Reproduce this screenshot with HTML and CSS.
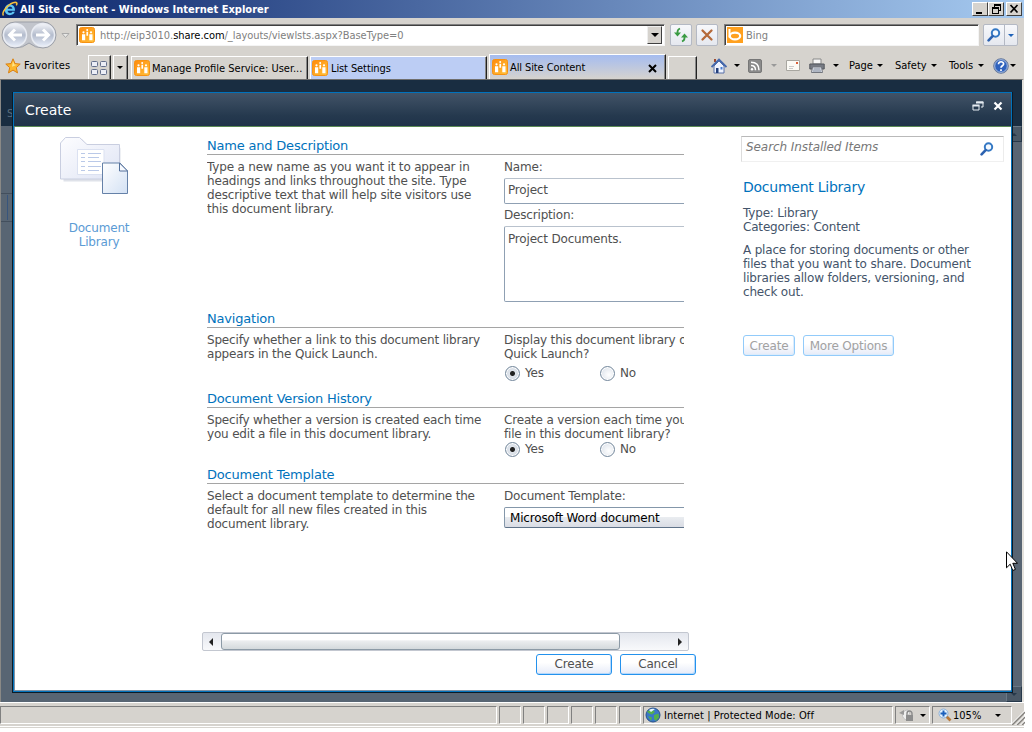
FILE: index.html
```
<!DOCTYPE html>
<html lang="en">
<head>
<meta charset="utf-8">
<title>All Site Content - Windows Internet Explorer</title>
<link rel="stylesheet" href="styles.css">
</head>
<body>
<svg class="defs" width="0" height="0">
  <defs>
    <linearGradient id="g-orange" x1="0" y1="0" x2="1" y2="1"><stop offset="0" stop-color="#ff8a0c"/><stop offset="1" stop-color="#ffc23a"/></linearGradient>
    <linearGradient id="g-nav" x1="0" y1="0" x2="0" y2="1"><stop offset="0" stop-color="#f4f6fa"/><stop offset=".5" stop-color="#b4bccd"/><stop offset="1" stop-color="#e8eefa"/></linearGradient>
    <linearGradient id="g-folder" x1="0" y1="0" x2="1" y2="1"><stop offset="0" stop-color="#fdfdff"/><stop offset="1" stop-color="#dfe4f4"/></linearGradient>
    <linearGradient id="g-page" x1="0" y1="0" x2="1" y2="1"><stop offset="0" stop-color="#ffffff"/><stop offset="1" stop-color="#d3e1f4"/></linearGradient>
  </defs>
  <symbol id="site" viewBox="0 0 16 16">
    <rect x=".5" y=".5" width="15" height="15" rx="2" fill="url(#g-orange)" stroke="#f79212"/>
    <g fill="#fff"><circle cx="4.500" cy="5.300" r="1.100"/><circle cx="8.200" cy="3" r="1"/><circle cx="12" cy="5.300" r="1.100"/>
    <path d="M3 7.200h3.200v6H3zM7.400 4.800h1.700v4H7.400zM10.300 7.200h3.200v6h-3.200z"/></g>
  </symbol>
  <symbol id="mag" viewBox="0 0 14 14">
    <circle cx="8.5" cy="5" r="3.700" fill="#f5faff" stroke="#3478c4" stroke-width="2"/>
    <path d="M5.600 8.200 1.600 12.400" stroke="#2c62b0" stroke-width="2.600" stroke-linecap="round"/>
  </symbol>
</svg>

<div class="window">
  <header class="titlebar">
    <svg class="ie" viewBox="0 0 16 16"><path d="M13 9.800H5.600c.2 2.600 4 2.800 4.600 1h2.600c-1.600 5-10.300 4.400-10-2C2.400 1.600 13.400 1.200 13 9.800zM5.700 7.700h4.700c-.3-2.600-4.400-2.600-4.700 0z" fill="#5cc4f5"/><path d="M1.500 14.500C-1 11.500 7 1.500 13.500 1.200c2 0 1.500 2 .8 3.200" fill="none" stroke="#f8c03c" stroke-width="1.500"/></svg>
    <span class="title-text">All Site Content - Windows Internet Explorer</span>
    <div class="caption-buttons">
      <span class="cap"><svg viewBox="0 0 14 12"><path d="M3 9h6v2H3z"/></svg></span>
      <span class="cap"><svg viewBox="0 0 14 12"><path d="M5 1h7v2H5zM5 3h1v2H5zM11 3h1v5h-2V7h1zM3 4h7v2H3zM3 6h1v5H3zM9 6h1v5H9zM4 10h5v1H4z"/></svg></span>
      <span class="cap cap-close"><svg viewBox="0 0 14 12"><path d="m3.500 2 7 7.500m0-7.500-7 7.500" stroke="#000" stroke-width="1.700"/></svg></span>
    </div>
  </header>

  <div class="address-row">
    <svg class="nav" viewBox="0 0 72 30">
      <path d="M15 2h28a13 13 0 0 1 0 26q-8 0-14-5-6 5-14 5a13 13 0 0 1 0-26z" fill="#c2c5cc" stroke="#9b9fa8"/>
      <circle cx="15" cy="15" r="11.500" fill="url(#g-nav)" stroke="#e9ecf3" stroke-width="1.500"/>
      <circle cx="43" cy="15" r="11.500" fill="url(#g-nav)" stroke="#e9ecf3" stroke-width="1.500"/>
      <path d="M22 15H10m5-5.500L9.500 15l5.500 5.500" fill="none" stroke="#fff" stroke-width="3"/>
      <path d="M36 15h12m-5-5.500 5.500 5.500-5.500 5.500" fill="none" stroke="#fff" stroke-width="3"/>
      <path d="M62 13.500h7l-3.500 4z" fill="#e8e8e6" stroke="#a9a9a9"/>
    </svg>
    <div class="field address">
      <svg class="i16"><use href="#site"/></svg>
      <span class="url">http://eip3010.<b>share.com</b>/_layouts/viewlsts.aspx?BaseType=0</span>
      <span class="drop-btn"><i class="tri big"></i></span>
    </div>
    <span class="sq refresh"><svg viewBox="0 0 16 16"><path d="M7 1.500Q4.500 2.500 4.500 5v1" fill="none" stroke="#3a9b43" stroke-width="1.800"/><path d="M1 5.500h7L4.500 9.500z" fill="#3a9b43"/><path d="M9 14.500q2.500-1 2.500-3.500v-1" fill="none" stroke="#3a9b43" stroke-width="1.800"/><path d="M8 10.500h7l-3.500-4z" fill="#3a9b43"/></svg></span>
    <span class="sq stop"><svg viewBox="0 0 16 16"><path d="m3.500 3.500 9 9M12.500 3.500l-9 9" stroke="#b56a3a" stroke-width="2.300" stroke-linecap="round"/></svg></span>
    <div class="field bing">
      <svg class="i16" viewBox="0 0 16 16"><rect width="16" height="16" fill="#ffa01e"/><path d="M2.500 2v8.500" stroke="#fff" stroke-width="2"/><ellipse cx="8" cy="9" rx="5.200" ry="3.400" fill="none" stroke="#fff" stroke-width="2.200"/></svg>
      <span class="url">Bing</span>
    </div>
    <div class="search-btn"><span><svg viewBox="0 0 14 14"><use href="#mag"/></svg></span><span class="sb-drop"><i class="tri blue"></i></span></div>
  </div>

  <div class="tab-row">
    <svg class="star" viewBox="0 0 16 16"><path d="m8 .8 2 4.800 5.200.5-3.900 3.500 1.200 5.300L8 12.100 3.500 14.900l1.200-5.300L.8 6.100 6 5.600z" fill="#fdb72c" stroke="#d98014"/><path d="m8 3 1.200 3.400 2.800.4-5 2z" fill="#ffe58a"/></svg>
    <span class="fav">Favorites</span>
    <span class="raised quick"><svg viewBox="0 0 16 16"><g fill="#eceef6" stroke="#65708c"><rect x=".5" y="1.500" width="6" height="5" rx="1"/><rect x="9.500" y="1.500" width="6" height="5" rx="1"/><rect x=".5" y="9.500" width="6" height="5" rx="1"/><rect x="9.500" y="9.500" width="6" height="5" rx="1"/></g></svg></span>
    <span class="raised qdrop"><i class="tri"></i></span>
    <div class="tab t1"><svg class="i16"><use href="#site"/></svg><span>Manage Profile Service: User...</span></div>
    <div class="tab t2"><svg class="i16"><use href="#site"/></svg><span>List Settings</span></div>
    <div class="tab t3"><svg class="i16"><use href="#site"/></svg><span>All Site Content</span><svg class="tab-x" viewBox="0 0 9 9"><path d="m1 1 7 7m0-7L1 8" stroke="#000" stroke-width="2"/></svg></div>
    <div class="raised newtab"></div>
    <div class="commands">
      <svg class="home" viewBox="0 0 16 16"><path d="M3 1h2v3H3z" fill="#9c4a30"/><path d="M3 8v7h10V8L8 3z" fill="#eef3ff" stroke="#5871a8"/><path d="M.5 9 8 1.500 15.500 9" fill="none" stroke="#4468ac" stroke-width="1.800"/><path d="M5 10h2.500v5H5z" fill="#23407c"/><path d="M9.500 9h2v2.500h-2z" fill="#4a7fd0"/></svg>
      <i class="tri a1"></i>
      <svg class="rss" viewBox="0 0 14 14"><rect x=".5" y=".5" width="13" height="13" rx="1.500" fill="#8b8b8b" stroke="#777"/><circle cx="4" cy="10.300" r="1.200" fill="#fff"/><path d="M3 6.500q4.500 0 4.500 4.700M3 3.200q8 0 8 8" fill="none" stroke="#fff" stroke-width="1.500"/></svg>
      <i class="tri gray a2"></i>
      <svg class="mail" viewBox="0 0 14 11"><path d="M.5.5h13v10H.5z" fill="#fbfaf5" stroke="#a8a6a0"/><path d="M10 2h2v2h-2z" fill="#d9603a"/><path d="M3 6.500h5M3 8.500h4" stroke="#c9c9c9"/></svg>
      <svg class="print" viewBox="0 0 16 16"><path d="M4 1h8v5H4z" fill="#f8f8f8" stroke="#888"/><path d="M.8 6h14.400v5H.8z" fill="#777b84" stroke="#55585e"/><path d="M3.500 9h9l1 5.500h-11z" fill="#e2e6ee" stroke="#72767e"/><path d="M4.500 11h7m-7.500 2h8" stroke="#7a8496"/></svg>
      <i class="tri a3"></i>
      <span class="c-page">Page</span><i class="tri"></i>
      <span class="c-safety">Safety</span><i class="tri"></i>
      <span class="c-tools">Tools</span><i class="tri"></i>
      <svg class="help" viewBox="0 0 16 16"><circle cx="8" cy="8" r="7.300" fill="#2f62bd" stroke="#6f7f9c" stroke-width="1"/><circle cx="8" cy="8" r="6.300" fill="none" stroke="#c8d2e4" stroke-width=".8"/><path d="M5.500 6.200c0-3.400 5.200-3 5.100-.2C10.500 7.800 8 7.700 8 9.700M8 11.200v1.800" fill="none" stroke="#fff" stroke-width="1.700"/></svg>
      <i class="tri a4"></i>
    </div>
  </div>

  <main class="viewport">
    <div class="page-band"><span>S</span></div>
    <div class="page-rail"></div>
    <div class="page-scroll"><span class="sc-btn"><i class="tri up"></i></span><span class="sc-btn"><i class="tri"></i></span></div>

    <section class="dialog">
      <div class="dialog-head">
        <h1>Create</h1>
        <svg class="d-max" viewBox="0 0 12 10"><path d="M4.500 1h6.500v5h-2" fill="none" stroke="#e6ecf2" stroke-width="1"/><path d="M4 .5h7.500v2H4z" fill="#e6ecf2"/><path d="M1 4.500h6V9H1z" fill="#25394e" stroke="#e6ecf2"/><path d="M.5 3.500h7v2h-7z" fill="#e6ecf2"/></svg>
        <svg class="d-close" viewBox="0 0 10 10"><path d="m1.500 1.500 7 7m0-7-7 7" stroke="#fff" stroke-width="2.200"/></svg>
      </div>
      <div class="dialog-body">
        <aside class="template">
          <svg viewBox="0 0 70 60">
            <path d="M2 43V7l5-6h14l5 7h32l1 2v33z" fill="#c9cedb" opacity=".6" transform="translate(1.500 1.500)"/>
            <path d="M.5 42V6l5-5.500h14L27 7.500h32.500V42z" fill="url(#g-folder)" stroke="#c9cee0"/>
            <path d="M17.500 12.500H44v25H17.500z" fill="#fff" stroke="#dbe1f1"/>
            <g stroke="#bac9e8"><path d="M21 16.500h4m3 0h13M21 20.500h4m3 0h11M21 24.500h4m3 0h13M21 29.500h4m3 0h13M21 33.500h4m3 0h11"/></g>
            <path d="M42.500 26H60l7.500 8v22.500h-25z" fill="url(#g-page)" stroke="#6581a8"/>
            <path d="M59.500 26v8h8z" fill="#f7faff" stroke="#54719b"/>
          </svg>
          <p>Document<br>Library</p>
        </aside>

        <div class="form-col">
          <div class="form-clip">
            <section class="group g1">
              <h2>Name and Description</h2>
              <div class="cols">
                <p>Type a new name as you want it to appear in<br>headings and links throughout the site. Type<br>descriptive text that will help site visitors use<br>this document library.</p>
                <div class="inputs">
                  <label>Name:</label>
                  <div class="box name-box">Project</div>
                  <label>Description:</label>
                  <div class="box desc-box">Project Documents.</div>
                </div>
              </div>
            </section>
            <section class="group g2">
              <h2>Navigation</h2>
              <div class="cols">
                <p>Specify whether a link to this document library<br>appears in the Quick Launch.</p>
                <div class="inputs">
                  <p>Display this document library on the<br>Quick Launch?</p>
                  <div class="radios r1"><span class="radio on"></span><span class="yes">Yes</span><span class="radio"></span><span>No</span></div>
                </div>
              </div>
            </section>
            <section class="group g3">
              <h2>Document Version History</h2>
              <div class="cols">
                <p>Specify whether a version is created each time<br>you edit a file in this document library.</p>
                <div class="inputs">
                  <p>Create a version each time you edit a<br>file in this document library?</p>
                  <div class="radios"><span class="radio on"></span><span class="yes">Yes</span><span class="radio"></span><span>No</span></div>
                </div>
              </div>
            </section>
            <section class="group g4">
              <h2>Document Template</h2>
              <div class="cols">
                <p>Select a document template to determine the<br>default for all new files created in this<br>document library.</p>
                <div class="inputs">
                  <p>Document Template:</p>
                  <div class="select">Microsoft Word document</div>
                </div>
              </div>
            </section>
          </div>
          <div class="hscroll"><span class="hs-arrow"><i class="tri left"></i></span><span class="thumb"></span><span class="hs-rest"><i class="tri right"></i></span></div>
          <div class="actions"><span class="btn">Create</span><span class="btn">Cancel</span></div>
        </div>

        <aside class="info">
          <div class="search"><em>Search Installed Items</em><svg viewBox="0 0 14 14"><use href="#mag"/></svg></div>
          <h3>Document Library</h3>
          <p>Type: Library<br>Categories: Content</p>
          <p class="about">A place for storing documents or other<br>files that you want to share. Document<br>libraries allow folders, versioning, and<br>check out.</p>
          <div class="info-actions"><span class="btn off">Create</span><span class="btn off wide">More Options</span></div>
        </aside>
      </div>
    </section>
    <svg class="cursor" viewBox="0 0 12 21"><path d="M.5.8v16l3.700-3.600 2.600 6.300 2.600-1.100-2.600-6.100h4.700z" fill="#fff" stroke="#000"/></svg>
  </main>

  <footer class="status">
    <span class="cell wide0"></span><span class="cell s"></span><span class="cell s"></span><span class="cell s"></span><span class="cell s"></span><span class="cell s"></span><span class="cell s"></span>
    <span class="cell zone"><svg viewBox="0 0 16 16"><circle cx="8" cy="8" r="7" fill="#3a78c9" stroke="#27518c"/><path d="M2 4.500 7 2l3 3-3 2.500-3-1zM9 8l4.500-1.500.5 4-3 3.500-2-2zM3 9l4 1.500-1 3.500z" fill="#54b04c"/><path d="M4 3q3-2 6-1L6 5z" fill="#e6f4ff"/></svg><span>Internet | Protected Mode: Off</span></span>
    <span class="cell lock"><svg viewBox="0 0 16 16"><path d="M8 13A5 5 0 1 1 9 3l2 3-3 4z" fill="#efefef" stroke="#c0c0c0"/><path d="m0 6 5-3v5z" fill="#999"/><path d="M8 8V6.500a2.500 2.500 0 0 1 5 0V8" fill="none" stroke="#8a8a8a" stroke-width="1.400"/><path d="M7 8h7v6H7z" fill="#8d8d8d"/></svg><i class="tri"></i></span>
    <span class="cell zoom"><svg viewBox="0 0 14 14"><path d="m8.500 8.500 4 4" stroke="#b8793a" stroke-width="2.600"/><circle cx="5.500" cy="5.500" r="4.500" fill="#e4f2fd" stroke="#8cb0d8"/><path d="M5.500 2.500v6m-3-3h6" stroke="#1c60bc" stroke-width="2"/></svg><span>105%</span><i class="tri"></i></span>
    <svg class="grip" viewBox="0 0 14 14"><path d="M1 14 14 1M6 14l8-8M11 14l3-3" stroke="#868480" stroke-width="1.600"/><path d="M-.5 14 14-.5M4.500 14 14 4.500M9.500 14 14 9.500" stroke="#fff"/></svg>
  </footer>
</div>
</body>
</html>
```

FILE: styles.css
```
* { box-sizing: border-box; }
body { margin: 0; background: #fff; overflow: hidden; }
h1, h2, h3, p { margin: 0; font-weight: normal; }
svg { display: block; flex: none; }
.defs { position: absolute; }
.i16 { width: 16px; height: 16px; }

.window {
  width: 1024px; height: 728px;
  display: flex; flex-direction: column;
  background: #d6d3ce; color: #000;
  font: 11px/14px "DejaVu Sans Condensed", "DejaVu Sans", sans-serif;
  white-space: nowrap;
}

.tri { display: block; flex: none; width: 0; height: 0; border: solid transparent; border-width: 3px 3px 0; border-top-color: #000; }
.tri.big { border-width: 4px 4px 0; }
.tri.blue { border-top-color: #1e62b8; }
.tri.gray { border-top-color: #999; }
.tri.up { border-width: 0 3px 3px; border-bottom-color: #26384a; }
.tri.left { border-width: 4px 4px 4px 0; border-right-color: #222; border-top-color: transparent; }
.tri.right { border-width: 4px 0 4px 4px; border-left-color: #222; border-top-color: transparent; }

/* Title bar */
.titlebar { height: 18px; flex: none; display: flex; align-items: center; padding: 0 2px 0 2px; background: linear-gradient(90deg, #0a246a, #a6caf0); }
.ie { width: 16px; height: 16px; }
.title-text { margin-left: 2px; padding-top: 1px; color: #fff; font-weight: bold; letter-spacing: .01px; }
.caption-buttons { display: flex; margin-left: auto; }
.cap { width: 16px; height: 14px; background: #d6d3ce; border: 1px solid; border-color: #fff #404040 #404040 #fff; }
.cap svg { width: 14px; height: 12px; }
.cap-close { margin-left: 2px; }

/* Address row */
.address-row { height: 34px; flex: none; display: flex; align-items: center; }
.nav { width: 72px; height: 30px; margin-right: 4px; }
.field { height: 22px; background: #fff; display: flex; align-items: center; border: 1px solid; border-color: #808080 #f4f4f4 #f4f4f4 #808080; box-shadow: inset 1px 1px #404040; padding: 1px 2px; }
.address { width: 589px; }
.bing { width: 255px; margin-left: 6px; }
.url { color: #808080; margin-left: 5px; padding-top: 1px; letter-spacing: -.04px; }
.bing .url { margin-left: 3px; }
.url b { font-weight: normal; color: #000; }
.drop-btn { width: 15px; height: 18px; margin-left: auto; display: flex; align-items: center; justify-content: center; background: #d6d3ce; border: 1px solid; border-color: #eee #404040 #404040 #eee; }
.sq { width: 22px; height: 22px; display: flex; align-items: center; justify-content: center; border: 1px solid #b4b9c4; border-radius: 2px; background: linear-gradient(#f7f8fb, #e5e8ef); }
.sq svg { width: 16px; height: 16px; }
.refresh { margin-left: 5px; }
.stop { margin-left: 4px; }
.search-btn { width: 35px; height: 22px; margin-left: 4px; display: flex; border: 1px solid #b4b9c4; border-radius: 2px; background: linear-gradient(#f7f8fb, #e5e8ef); }
.search-btn span { width: 20px; display: flex; align-items: center; justify-content: center; }
.search-btn svg { width: 14px; height: 14px; }
.search-btn .sb-drop { width: 13px; border-left: 1px solid #b4b9c4; }

/* Tabs and commands */
.tab-row { height: 27px; flex: none; display: flex; align-items: flex-end; }
.star { width: 16px; height: 16px; margin: 0 3px 5px 5px; }
.fav { width: 64px; height: 14px; margin-bottom: 6px; letter-spacing: .2px; }
.raised { height: 24px; display: flex; align-items: center; justify-content: center; border: 1px solid #fff; border-right: 1px solid #222; border-bottom: 0; box-shadow: inset -1px 0 #888; }
.quick { width: 23px; padding-right: 2px; }
.quick svg { width: 16px; height: 16px; }
.qdrop { width: 15px; margin-left: 2px; padding-right: 2px; }
.tab { display: flex; align-items: center; height: 23px; margin-left: 3px; padding-left: 2px; border: 1px solid #fff; border-right: 1px solid #222; border-bottom: 0; box-shadow: inset -1px 0 #888; }
.tab span { margin-left: 2px; padding-top: 1px; }
.t1 { width: 177px; }
.t2 { width: 177px; margin-left: 2px; padding-left: 1px; background: #bccdf4; }
.t2 span { margin-left: 3px; }
.t3 { width: 177px; height: 25px; margin-left: 2px; background: linear-gradient(#a5bcf0, #d6d3ce); }
.t2 span, .t3 span { letter-spacing: -.1px; }
.tab-x { width: 9px; height: 9px; margin: 2px 8px 0 auto; }
.newtab { width: 29px; margin-left: 2px; height: 23px; }
.commands { width: 326px; height: 27px; display: flex; align-items: center; margin-left: auto; }
.commands span { flex: none; }
.home, .print, .help { width: 16px; height: 16px; }
.home { margin-left: 13px; }
.a1 { margin-left: 7px; }
.rss { width: 14px; height: 14px; margin-left: 8px; }
.a2 { margin-left: 9px; }
.mail { width: 14px; height: 11px; margin-left: 9px; }
.print { margin-left: 9px; }
.a3 { margin-left: 8px; }
.c-page { width: 28px; margin-left: 10px; }
.c-safety { width: 36px; margin-left: 12px; }
.c-tools { width: 29px; margin-left: 12px; }
.help { margin-left: 9px; }
.a4 { margin-left: 1px; }

/* Dimmed page behind the dialog */
.viewport { position: relative; height: 623px; flex: none; background: #586573; border-top: 1px solid #706f6e; border-left: 1px solid #8a8986; border-right: 2px solid #e4e2dd; font-family: "DejaVu Sans", sans-serif; }
.page-band { height: 46px; background: #192d41; padding: 27px 0 0 6px; color: #5b6d7e; font-size: 10px; }
.page-rail { width: 11px; height: 29px; margin-top: 67px; border-top: 1px solid #434f5d; border-bottom: 1px solid #434f5d; }
.page-rail::before { content: ""; display: block; width: 1px; height: 25px; margin: 1px 0 0 6px; background: #38557c; }
.page-scroll { position: absolute; right: 0; top: 46px; bottom: 0; width: 16px; display: flex; flex-direction: column; justify-content: space-between; }
.sc-btn { height: 16px; display: flex; align-items: center; justify-content: center; background: #4a5866; border: 1px solid; border-color: #6a7886 #26384a #26384a #6a7886; }
.sc-btn .tri { border-top-color: #26384a; }

/* Dialog */
.dialog { position: absolute; left: 11px; top: 12px; width: 1001px; height: 601px; display: flex; flex-direction: column; border: 1px solid #0c1a26; border-top: 0; }
.dialog::before { content: ""; position: absolute; inset: 0; border: 1px solid #0072bc; pointer-events: none; }
.dialog-head { height: 35px; flex: none; display: flex; align-items: center; padding: 0 9px 0 12px; background: linear-gradient(#435468, #25394e 70%, #20324a); border-bottom: 1px solid #5b8a55; color: #fff; }
.dialog-head h1 { font-size: 14px; line-height: 18px; flex: 1; padding-top: 2px; letter-spacing: -.05px; }
.d-max { width: 12px; height: 10px; margin: -7px 9px 0 0; }
.d-close { width: 10px; height: 10px; margin-top: -7px; }
.dialog-body { flex: 1; display: flex; background: #fff; border: solid #7f92a5; border-width: 0 0 1px 1px; margin: 0 1px 1px; color: #505050; font-size: 12px; line-height: 14px; letter-spacing: -.18px; }

.template { width: 187px; padding: 10px 0 0 45px; }
.template svg { width: 70px; height: 60px; }
.template p { width: 78px; margin-top: 24px; text-align: center; color: #5b9bd5; }

.form-col { width: 495px; flex: none; }
.form-clip { width: 477px; height: 505px; margin-left: 5px; padding-top: 11px; overflow: hidden; }
.group h2 { height: 17px; font-size: 13px; line-height: 15px; letter-spacing: -.2px; color: #0072bc; border-bottom: 1px solid #a5a5a5; }
.g1 { height: 173px; }
.g2 { height: 80px; }
.g3 { height: 76px; }
.cols { display: grid; grid-template-columns: 297px 400px; padding-top: 5px; }
.box { border: 1px solid; border-color: #b9c2cd #8fa0b3 #8fa0b3; border-radius: 2px; padding: 4px 3px; }
.name-box { height: 26px; margin: 4px 0; }
.desc-box { height: 76px; margin-top: 4px; padding-top: 5px; }
.radios { display: flex; align-items: center; height: 16px; padding-left: 1px; }
.r1 { margin-top: 4px; }
.radio { width: 15px; height: 15px; margin-right: 5px; border-radius: 50%; border: 1px solid #73879b; box-shadow: inset 0 0 0 1px #fff; background: radial-gradient(circle at 60% 60%, #fff, #d5dce6); }
.radio.on { background: radial-gradient(circle, #222 0 2px, #dfe4eb 3px, #cdd5df); }
.yes { width: 75px; }
.select { height: 21px; margin-top: 4px; padding: 3px 5px; color: #000; border: 1px solid #8497aa; border-bottom-color: #5f7389; border-radius: 2px; background: linear-gradient(#fff 45%, #e9ecf0 50%, #d9dce4); }

.hscroll { width: 487px; height: 19px; display: flex; border: 1px solid #c3c7d0; border-radius: 2px; background: linear-gradient(#e4e7ee, #f8f9fb); }
.hs-arrow { width: 18px; padding-left: 6px; display: flex; align-items: center; }
.thumb { width: 399px; border: 1px solid #8c9aa6; border-radius: 3px; background: linear-gradient(#fff 40%, #eceef0 45%, #d4d9dc); }
.hs-rest { flex: 1; display: flex; align-items: center; justify-content: flex-end; padding-right: 6px; }
.actions { display: flex; gap: 8px; margin: 3px 0 0 334px; }
.btn { width: 76px; height: 21px; line-height: 19px; text-align: center; border: 1px solid #2492ed; border-radius: 3px; box-shadow: inset -1px -1px #b5d8fb; background: linear-gradient(#fff 40%, #e6ebf8); }

.info { margin-left: 44px; width: 263px; padding-top: 9px; color: #44546a; }
.search { height: 26px; display: flex; justify-content: space-between; padding: 3px 9px 0 4px; border: 1px solid; border-color: #b9b9b9 #ececec #f0f0f0 #dcdcdc; color: #777; letter-spacing: -.07px; }
.search svg { width: 14px; height: 14px; margin-top: 2px; }
.info h3 { margin: 16px 0 10px 2px; font-size: 14px; line-height: 18px; color: #0072bc; letter-spacing: -.25px; }
.info p { margin-left: 2px; }
.info .about { margin-top: 9px; }
.info-actions { display: flex; gap: 8px; margin: 36px 0 0 2px; }
.btn.off { width: 52px; border-color: #92cbfa; box-shadow: inset -1px -1px #dcecfc; color: #a2a2a2; line-height: 20px; }
.btn.wide { width: 91px; }

.cursor { position: absolute; left: 1005px; top: 471px; width: 12px; height: 21px; }

/* Status bar */
.status { height: 25px; flex: none; display: flex; align-items: flex-start; padding-top: 3px; border-top: 1px solid #fff; border-bottom: 1px solid #fff; }
.cell { height: 18px; display: flex; align-items: center; flex: none; border: 1px solid; border-color: #808080 #fff #fff #808080; margin-right: 2px; }
.wide0 { width: 497px; }
.s { width: 22px; }
.zone { width: 250px; padding-left: 1px; }
.zone svg, .lock svg { width: 16px; height: 16px; }
.zone span { margin-left: 3px; padding-top: 1px; letter-spacing: .08px; }
.lock { width: 35px; padding-left: 3px; }
.lock .tri { margin-left: 5px; }
.zoom { width: 80px; padding-left: 5px; margin: 0; }
.zoom svg { width: 14px; height: 14px; }
.zoom span { width: 42px; margin-left: 1px; padding-top: 1px; }
.grip { width: 14px; height: 14px; margin-left: -1px; margin-top: 5px; }
```
